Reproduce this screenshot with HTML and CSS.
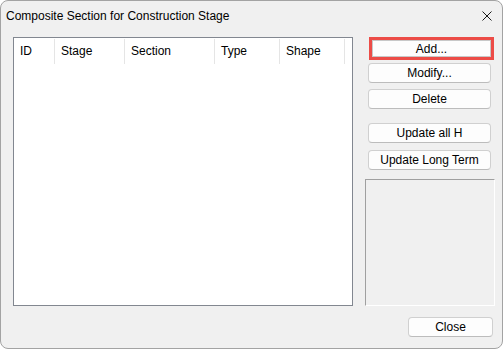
FILE: index.html
```html
<!DOCTYPE html>
<html lang="en">
<head>
  <meta charset="UTF-8">
  <title>Composite Section for Construction Stage</title>
  <link rel="stylesheet" href="styles.css">
</head>
<body>

  <div class="window">
    <!-- Title bar -->
    <div class="titlebar">
      <span class="title">Composite Section for Construction Stage</span>
      <svg class="close-x" width="10" height="10" viewBox="0 0 10 10">
        <path d="M0.5 0.5 L9.5 9.5 M9.5 0.5 L0.5 9.5"></path>
      </svg>
    </div>

    <!-- Dialog body -->
    <div class="body">
      <div class="list">
        <div class="list-head">
          <div class="col col-id">ID</div>
          <div class="col col-stage">Stage</div>
          <div class="col col-section">Section</div>
          <div class="col col-type">Type</div>
          <div class="col col-shape">Shape</div>
        </div>
      </div>

      <div class="side">
        <div class="highlight">
          <button class="btn btn-add">Add...</button>
        </div>
        <button class="btn btn-modify">Modify...</button>
        <button class="btn btn-delete">Delete</button>
        <button class="btn btn-upd-h">Update all H</button>
        <button class="btn btn-upd-lt">Update Long Term</button>
        <div class="preview"></div>
      </div>
    </div>

    <div class="footer">
      <button class="btn btn-close">Close</button>
    </div>
  </div>

</body>
</html>
```

FILE: styles.css
```css
body {
  margin: 0;
  background: #fff;
  font-family: "Liberation Sans", Arial, sans-serif;
  font-size: 12px;
  color: #000;
}

.window {
  width: 503px;
  height: 349px;
  box-sizing: border-box;
  border: 1px solid #a3a3a3;
  border-radius: 8px;
  background: #f0f0f0;
  display: flex;
  flex-direction: column;
}

.titlebar {
  height: 29px;
  display: flex;
  align-items: center;
  padding: 0 10px 0 5px;
}

.title {
  flex: 1;
}

.close-x path {
  stroke: #1a1a1a;
  stroke-width: 1;
  fill: none;
}

.body {
  display: flex;
  padding: 7px 0 0 12px;
}

.list {
  width: 340px;
  height: 269px;
  box-sizing: border-box;
  border: 1px solid #828790;
  background: #fff;
}

.list-head {
  display: flex;
  height: 25px;
  margin-top: 1px;
}

.col {
  box-sizing: border-box;
  padding-left: 6px;
  line-height: 24px;
  border-right: 1px solid #e5e5e5;
}

.col-id { width: 41px; }
.col-stage { width: 70px; }
.col-section { width: 90px; }
.col-type { width: 65px; }
.col-shape { width: 65px; }

.side {
  width: 130px;
  margin-left: 12px;
  display: flex;
  flex-direction: column;
}

.btn {
  font-family: inherit;
  font-size: 12px;
  color: #000;
  background: #fdfdfd;
  border: 1px solid #d0d0d0;
  border-bottom-color: #bcbcbc;
  border-radius: 4px;
  height: 20px;
  padding: 0;
  display: block;
}

.side .btn {
  width: 123px;
  margin-left: 3px;
}

/* red annotation box round the Add button */
.highlight {
  width: 125px;
  height: 23px;
  margin-left: 4px;
  box-sizing: border-box;
  border: 3px solid #ec4c47;
  display: flex;
}

.side .btn-add {
  width: 100%;
  height: 100%;
  margin: 0;
  border-radius: 0;
  border-color: #c8c8c8;
}

.btn-modify { margin-top: 3px; }
.btn-delete { margin-top: 6px; }
.btn-upd-h { margin-top: 14px; }
.btn-upd-lt { margin-top: 7px; }

.preview {
  margin-top: 9px;
  height: 127px;
  box-sizing: border-box;
  border: 1px solid #a0a0a0;
  border-right-color: #fff;
  border-bottom-color: #fff;
}

.footer {
  display: flex;
  justify-content: flex-end;
  padding: 11px 9px 0 0;
}

.btn-close {
  width: 85px;
}
```
